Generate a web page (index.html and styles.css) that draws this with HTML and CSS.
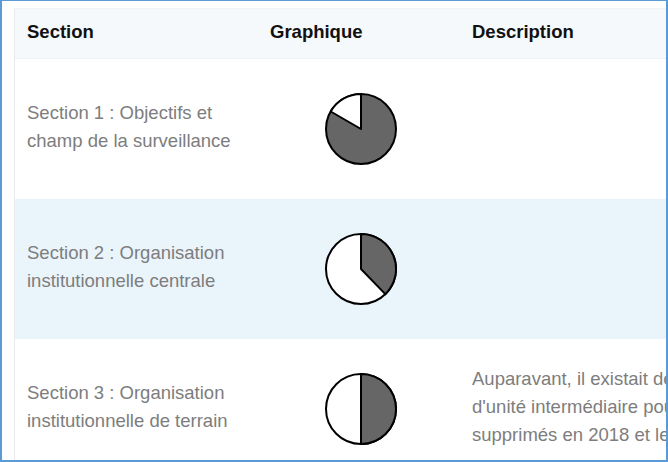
FILE: index.html
```html
<!DOCTYPE html>
<html lang="fr">
<head>
<meta charset="utf-8">
<title>Sections</title>
<link rel="stylesheet" href="styles.css">
</head>
<body>
<div class="frame">
  <div class="table">
    <div class="row head">
      <div class="cell">Section</div>
      <div class="cell">Graphique</div>
      <div class="cell">Description</div>
    </div>
    <div class="row">
      <div class="cell label">Section 1 : Objectifs et champ de la surveillance</div>
      <div class="cell chart">
        <svg class="pie" width="74" height="74" viewBox="0 0 74 74">
          <circle cx="37" cy="37" r="35" fill="#666" stroke="#000" stroke-width="2"/>
          <path d="M37 37 L37 2 A35 35 0 0 0 6.69 19.5 Z" fill="#fff" stroke="#000" stroke-width="2" stroke-linejoin="round"/>
        </svg>
      </div>
      <div class="cell desc"></div>
    </div>
    <div class="row alt">
      <div class="cell label">Section 2 : Organisation institutionnelle centrale</div>
      <div class="cell chart">
        <svg class="pie" width="74" height="74" viewBox="0 0 74 74">
          <circle cx="37" cy="37" r="35" fill="#fff" stroke="#000" stroke-width="2"/>
          <path d="M37 37 L37 2 A35 35 0 0 1 61.31 62.18 Z" fill="#666" stroke="#000" stroke-width="2" stroke-linejoin="round"/>
        </svg>
      </div>
      <div class="cell desc"></div>
    </div>
    <div class="row">
      <div class="cell label">Section 3 : Organisation institutionnelle de terrain</div>
      <div class="cell chart">
        <svg class="pie" width="74" height="74" viewBox="0 0 74 74">
          <circle cx="37" cy="37" r="35" fill="#fff" stroke="#000" stroke-width="2"/>
          <path d="M37 37 L37 2 A35 35 0 0 1 37 72 Z" fill="#666" stroke="#000" stroke-width="2" stroke-linejoin="round"/>
        </svg>
      </div>
      <div class="cell desc">Auparavant, il existait des districts sanitaires servant<br>d'unité intermédiaire pour la surveillance ; ils ont été<br>supprimés en 2018 et les régions ont repris leurs missions.</div>
    </div>
  </div>
</div>
</body>
</html>
```
FILE: styles.css
```css
* { box-sizing: border-box; }
html, body {
  margin: 0;
  padding: 0;
  background: #fff;
}
body {
  font-family: "Liberation Sans", Arial, sans-serif;
  font-size: 18.5px;
}
.frame {
  width: 668px;
  height: 462px;
  overflow: hidden;
  border: 2px solid #5b9bd5;
  border-top-width: 1px;
  background: #fff;
  padding: 7px 0 0 12px;
}
.table {
  width: 1000px;
  border-left: 1px solid #ebebeb;
  border-top: 1px solid #f0f2f4;
}
.row {
  display: grid;
  grid-template-columns: 243px 202px 1fr;
  height: 140px;
  align-items: center;
}
.row.head {
  height: 50px;
  background: #f5f9fc;
  border-bottom: 1px solid #eef1f4;
  font-weight: bold;
  color: #111;
  padding-bottom: 3px;
}
.row.alt {
  background: #eaf4fb;
}
.cell {
  padding: 0 12px;
}
.label {
  color: #7d7d7d;
  line-height: 28px;
  padding-right: 0;
  margin-top: -4px;
}
.chart {
  display: flex;
  justify-content: center;
  padding-left: 16px;
}
.pie {
  display: block;
}
.desc {
  color: #7d7d7d;
  line-height: 28px;
  white-space: nowrap;
  margin-top: -4px;
}
```
